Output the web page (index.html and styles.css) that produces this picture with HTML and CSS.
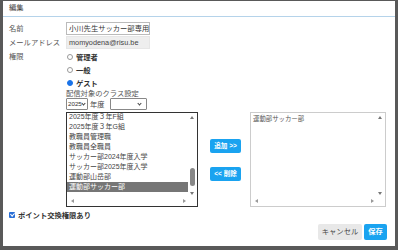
FILE: index.html
```html
<!DOCTYPE html>
<html lang="ja">
<head>
<meta charset="utf-8">
<link rel="stylesheet" href="styles.css">
</head>
<body>
<div class="dialog">
  <div class="head">編集</div>
  <div class="content">
    <div class="row r-name">
      <div class="label">名前</div>
      <div class="field"><div class="input">小川先生サッカー部専用</div></div>
    </div>
    <div class="row r-mail">
      <div class="label">メールアドレス</div>
      <div class="field"><div class="input ro">momyodena@risu.be</div></div>
    </div>
    <div class="row r-role">
      <div class="label">権限</div>
      <div class="field">
        <div class="radio"><span class="rb"></span><b>管理者</b></div>
        <div class="radio"><span class="rb"></span><b>一般</b></div>
        <div class="radio"><span class="rb on"></span><b>ゲスト</b></div>
        <div class="sub">配信対象のクラス設定</div>
        <div class="selrow">
          <div class="sel s1">2025<span class="chev"></span></div>
          <span class="nendo">年度</span>
          <div class="sel s2"><span class="chev"></span></div>
        </div>
        <div class="transfer">
          <div class="list left">
            <div class="items">
              <div class="it">2025年度３年F組</div>
              <div class="it">2025年度３年G組</div>
              <div class="it">教職員管理職</div>
              <div class="it">教職員全職員</div>
              <div class="it">サッカー部2024年度入学</div>
              <div class="it">サッカー部2025年度入学</div>
              <div class="it">運動部山岳部</div>
              <div class="it sel-it">運動部サッカー部</div>
            </div>
            <div class="vbar"><span class="up"></span><span class="thumb"></span><span class="down"></span></div>
            <div class="hbar"><span class="lt"></span><span class="rt"></span></div>
          </div>
          <div class="btns">
            <div class="btn">追加 &gt;&gt;</div>
            <div class="btn">&lt;&lt; 削除</div>
          </div>
          <div class="list right">
            <div class="items">
              <div class="it">運動部サッカー部</div>
            </div>
            <div class="vbar"><span class="up"></span><span class="down"></span></div>
            <div class="hbar"><span class="lt"></span><span class="rt"></span></div>
          </div>
        </div>
      </div>
    </div>
    <div class="check"><span class="cb"></span><b>ポイント交換権限あり</b></div>
    <div class="foot">
      <div class="fbtn cancel">キャンセル</div>
      <div class="fbtn save">保存</div>
    </div>
  </div>
</div>
</body>
</html>
```
FILE: styles.css
```css
* { box-sizing: border-box; }
html, body { margin: 0; padding: 0; }
body {
  width: 398px; height: 250px; overflow: hidden;
  background: #595959;
  padding: 1px 3px 0 3px;
  font-family: "Liberation Sans", "Noto Sans CJK JP", sans-serif;
  font-size: 7.3px; color: #333;
}
.dialog {
  width: 392px; height: 245px; background: #fff;
  display: flex; flex-direction: column;
}
.head {
  height: 16px; line-height: 14px; padding-left: 6px;
  border-bottom: 1px solid #b5d3ea; color: #444;
}
.content { padding: 5px 8px 0 6px; flex: 1; display: flex; flex-direction: column; }
.row { display: flex; }
.label { width: 57px; color: #555; }
.field { flex: 1; display: flex; flex-direction: column; }
.r-name .label, .r-mail .label { line-height: 13px; }
.input {
  width: 84px; height: 13px; border: 1px solid #bbb; line-height: 11px;
  padding-left: 2px; color: #333; white-space: nowrap; overflow: hidden;
}
.input.ro { background: #eee; border-color: #e6e6e6; margin-top: 1px; color: #444; }
.r-mail .label { margin-top: 1px; }
.r-role { margin-top: 1px; }
.r-role .label { line-height: 13px; }
.radio { height: 13px; display: flex; align-items: center; }
.radio b { font-weight: bold; color: #333; }
.rb {
  width: 6px; height: 6px; border-radius: 50%; border: 1px solid #999;
  margin: 0 3px 0 1px; background: #fff;
}
.rb.on { background: #1a73e8; border-color: #1a73e8; }
.sub { height: 9px; line-height: 9px; color: #555; }
.selrow { display: flex; align-items: center; height: 12px; }
.sel {
  height: 12px; border: 1px solid #888; border-radius: 1px; position: relative;
  line-height: 10px; padding-left: 1px; font-size: 6.2px; color: #333;
}
.s1 { width: 22px; }
.s2 { width: 37px; margin-left: 5px; }
.nendo { margin-left: 2px; color: #444; }
.chev {
  position: absolute; right: 2px; top: 2.5px; width: 3px; height: 3px;
  border-right: 1px solid #444; border-bottom: 1px solid #444; transform: rotate(45deg);
}
.s2 .chev { right: 5px; }
.transfer { display: flex; margin-top: 2px; }
.list { position: relative; height: 95px; border: 1px solid #ccc; overflow: hidden; }
.list.left { width: 132px; border-color: #333; }
.list.right { width: 136px; margin-left: 9px; }
.left .items { margin-top: -1px; padding-left: 2px; padding-right: 9px; }
.right .items { padding-left: 2px; padding-top: 1px; }
.it { height: 10px; line-height: 10px; color: #444; white-space: nowrap; font-size: 7px; }
.it.sel-it { background: #767676; color: #fff; margin-left: -2px; padding-left: 2px; }
.right .it { font-size: 6.4px; color: #555; }
.vbar { position: absolute; right: 0; top: 0; bottom: 9px; width: 9px; }
.hbar { position: absolute; left: 0; right: 9px; bottom: 0; height: 9px; }
.up, .down, .lt, .rt { position: absolute; width: 0; height: 0; }
.up { top: 3px; left: 2px; border-left: 2.5px solid transparent; border-right: 2.5px solid transparent; border-bottom: 3px solid #777; }
.down { bottom: 2px; left: 2px; border-left: 2.5px solid transparent; border-right: 2.5px solid transparent; border-top: 3px solid #777; }
.lt { left: 4px; top: 2px; border-top: 2.5px solid transparent; border-bottom: 2.5px solid transparent; border-right: 3px solid #999; }
.rt { right: 2px; top: 2px; border-top: 2.5px solid transparent; border-bottom: 2.5px solid transparent; border-left: 3px solid #999; }
.thumb { position: absolute; left: 2px; width: 5px; top: 55px; height: 18px; background: #888; border-radius: 3px; }
.btns { display: flex; flex-direction: column; padding-top: 27px; margin-left: 12px; gap: 14px; }
.btn {
  width: 31px; height: 14px; background: #1aa3f0; color: #fff; border-radius: 2px;
  font-size: 6.6px; line-height: 14px; text-align: center; font-weight: bold;
}
.check { display: flex; align-items: center; height: 10px; margin-top: 3px; }
.check b { color: #333; }
.cb { width: 6px; height: 6px; background: #2a6fd6; border-radius: 1px; margin-right: 3px; position: relative; }
.cb::after {
  content: ""; position: absolute; left: 1.6px; top: 0.3px; width: 1.6px; height: 3.2px;
  border-right: 1px solid #fff; border-bottom: 1px solid #fff; transform: rotate(45deg);
}
.foot { display: flex; justify-content: flex-end; gap: 2px; margin-top: 4px; }
.fbtn { height: 16px; line-height: 16px; border-radius: 2px; text-align: center; }
.cancel { width: 44px; background: #e8e8e8; color: #444; }
.save { width: 23px; background: #1aa3f0; color: #fff; font-weight: bold; }
```
